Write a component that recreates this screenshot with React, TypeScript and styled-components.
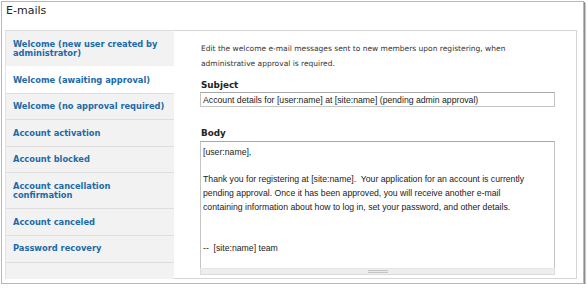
import React from "react";
import styled, { createGlobalStyle } from "styled-components";

const GlobalStyle = createGlobalStyle`
  html, body {
    margin: 0;
    padding: 0;
    background: #ffffff;
  }
`;

const Frame = styled.div`
  box-sizing: border-box;
  margin: 1px 0 0 1px;
  width: 583px;
  height: 283px;
  padding: 3px 4px 0 3px;
  border: 1px solid #b8b8b8;
  box-shadow: 1px 1px 0 #8c8c8c, 2px 2px 0 #c8c8c8;
  background: #ffffff;
`;

const Legend = styled.div`
  height: 13px;
  margin-bottom: 12px;
  padding-left: 1px;
  font-family: "DejaVu Sans", sans-serif;
  font-size: 11px;
  line-height: 12px;
  color: #222222;
`;

const VerticalTabs = styled.div`
  display: flex;
  width: 572px;
  height: 249px;
`;

const TabList = styled.ul`
  list-style: none;
  margin: 0;
  padding: 0;
  width: 169px;
  display: flex;
  flex-direction: column;
  background: #f2f2f2;
  border-top: 1px solid #dcdcdc;
  border-left: 1px solid #e4e4e4;
  box-sizing: border-box;
`;

const Tab = styled.li<{ $active?: boolean }>`
  padding: 8.5px 8px 7.7px 7px;
  border-top: 1px solid ${(p) => (p.$active ? "#ffffff" : "#dedede")};
  background: ${(p) => (p.$active ? "#ffffff" : "#f2f2f2")};
  margin-right: ${(p) => (p.$active ? "-1px" : "0")};
  font-family: "DejaVu Sans", sans-serif;
  font-weight: bold;
  font-size: 8.3px;
  line-height: 9.4px;
  color: #1d6aa8;

  &:first-child {
    border-top: none;
  }
`;

const TabFiller = styled.li`
  flex: 1;
  border-top: 1px solid #dedede;
`;

const Pane = styled.div`
  flex: 1;
  box-sizing: border-box;
  border: 1px solid #d6d6d6;
  border-left: none;
  padding: 10px 0 0 27px;
  background: #ffffff;
`;

const Description = styled.p`
  margin: 0;
  width: 330px;
  font-family: "DejaVu Sans", sans-serif;
  font-size: 7.5px;
  line-height: 15px;
  color: #333333;
`;

const Label = styled.div<{ $gap: number }>`
  margin-top: ${(p) => p.$gap}px;
  margin-bottom: 1px;
  font-family: "DejaVu Sans", sans-serif;
  font-weight: bold;
  font-size: 8.8px;
  line-height: 12px;
  color: #222222;
`;

const TextInput = styled.input`
  display: block;
  box-sizing: border-box;
  width: 355px;
  height: 15px;
  margin: 0 0 0 -1px;
  padding: 0 2px;
  border: 1px solid #c4c4c4;
  border-top-color: #a8a8a8;
  font-family: "Liberation Sans", Arial, sans-serif;
  font-size: 8.7px;
  color: #222222;
  outline: none;
`;

const TextAreaWrap = styled.div`
  margin: 2px 0 0 -1px;
  width: 355px;
`;

const TextArea = styled.textarea`
  display: block;
  box-sizing: border-box;
  width: 355px;
  height: 127px;
  margin: 0;
  padding: 4px 2px 2px;
  border: 1px solid #c4c4c4;
  border-top-color: #a8a8a8;
  border-bottom: none;
  resize: none;
  overflow: hidden;
  font-family: "Liberation Sans", Arial, sans-serif;
  font-size: 8.7px;
  line-height: 13.75px;
  color: #222222;
  outline: none;
`;

const Grippie = styled.div`
  box-sizing: border-box;
  height: 7px;
  display: flex;
  justify-content: center;
  align-items: center;
  background: #eeeeee;
  border: 1px solid #dcdcdc;
  border-top-color: #e6e6e6;
`;

const GripHandle = styled.div`
  width: 20px;
  height: 3px;
  background: repeating-linear-gradient(
    to bottom,
    #c4c4c4 0,
    #c4c4c4 1px,
    #e8e8e8 1px,
    #e8e8e8 2px
  );
`;

const tabs = [
  "Welcome (new user created by administrator)",
  "Welcome (awaiting approval)",
  "Welcome (no approval required)",
  "Account activation",
  "Account blocked",
  "Account cancellation confirmation",
  "Account canceled",
  "Password recovery",
];

const bodyText =
  "[user:name],\n\nThank you for registering at [site:name].  Your application for an account is currently\npending approval. Once it has been approved, you will receive another e-mail\ncontaining information about how to log in, set your password, and other details.\n\n\n--  [site:name] team";

const App = () => {
  return (
    <>
      <GlobalStyle />
      <Frame>
        <Legend>E-mails</Legend>
        <VerticalTabs>
          <TabList>
            {tabs.map((t, i) => (
              <Tab key={t} $active={i === 1}>
                {t === tabs[0] ? (
                  <>
                    Welcome (new user created by
                    <br />
                    administrator)
                  </>
                ) : t === tabs[5] ? (
                  <>
                    Account cancellation
                    <br />
                    confirmation
                  </>
                ) : (
                  t
                )}
              </Tab>
            ))}
            <TabFiller />
          </TabList>
          <Pane>
            <Description>
              Edit the welcome e-mail messages sent to new members upon
              registering, when administrative approval is required.
            </Description>
            <Label $gap={8}>Subject</Label>
            <TextInput
              readOnly
              value="Account details for [user:name] at [site:name] (pending admin approval)"
            />
            <Label $gap={19.5}>Body</Label>
            <TextAreaWrap>
              <TextArea readOnly value={bodyText} wrap="off" />
              <Grippie>
                <GripHandle />
              </Grippie>
            </TextAreaWrap>
          </Pane>
        </VerticalTabs>
      </Frame>
    </>
  );
};

export default App;
